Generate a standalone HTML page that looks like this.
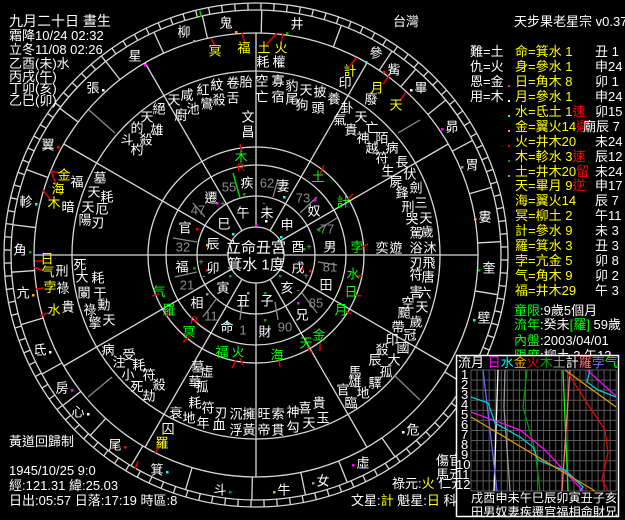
<!DOCTYPE html>
<html><head><meta charset="utf-8">
<style>
html,body{margin:0;padding:0;background:#000;}
body{width:625px;height:520px;overflow:hidden;position:relative;}
svg{position:absolute;left:0;top:0;}
text{font-family:"Liberation Sans","Noto Sans CJK TC",sans-serif;font-size:13px;fill:#fff;}
.c text{text-anchor:middle;dominant-baseline:central;}
.y{fill:#ffff00}.g{fill:#00ff00}.r{fill:#ff0000}.gr{fill:#8c8c8c}
</style></head><body>
<svg id="s" width="625" height="520" viewBox="0 0 625 520">
<g id="geo" fill="none" stroke="#d8d8d8" stroke-width="1.3"></g>
<g stroke="#8a8a8a" stroke-width="1.3">
<line x1="89" y1="110" x2="115" y2="133"/><line x1="398" y1="133" x2="420" y2="120"/>
<line x1="112" y1="377" x2="88" y2="397"/><line x1="394" y1="375" x2="420" y2="400"/>
<line x1="278" y1="179" x2="273" y2="197"/><line x1="317" y1="197" x2="300" y2="213"/>
<line x1="337" y1="218" x2="317" y2="230"/><line x1="317" y1="313" x2="302" y2="293"/>
<line x1="278" y1="320" x2="275" y2="302"/><line x1="240" y1="320" x2="242" y2="302"/>
<line x1="217" y1="298" x2="203" y2="317"/><line x1="197" y1="272" x2="175" y2="277"/>
<line x1="173" y1="238" x2="197" y2="242"/><line x1="193" y1="203" x2="205" y2="217"/>
<line x1="337" y1="265" x2="318" y2="262"/>
</g>
<g stroke="#00d000" stroke-width="1.5"><line x1="233" y1="173" x2="240" y2="198"/><line x1="200" y1="11" x2="201" y2="17"/></g>
<g stroke="#e00000" stroke-width="1.5">
<line x1="211" y1="38" x2="215" y2="46"/><line x1="242" y1="33" x2="245" y2="44"/>
<line x1="277" y1="33" x2="266" y2="45"/><line x1="283" y1="33" x2="281" y2="44"/>
<line x1="356" y1="58" x2="350" y2="66"/><line x1="390" y1="75" x2="383" y2="84"/>
<line x1="406" y1="92" x2="400" y2="101"/><line x1="51" y1="171" x2="60" y2="173"/>
<line x1="51" y1="171" x2="56" y2="184"/><line x1="43" y1="190" x2="50" y2="199"/>
<line x1="35" y1="261" x2="43" y2="261"/><line x1="33" y1="267" x2="42" y2="270"/>
<line x1="36" y1="289" x2="44" y2="288"/><line x1="40" y1="316" x2="48" y2="313"/>
<line x1="240" y1="144" x2="242" y2="152"/><line x1="324" y1="165" x2="320" y2="174"/>
<line x1="353" y1="194" x2="347" y2="200"/><line x1="368" y1="244" x2="362" y2="247"/>
<line x1="362" y1="276" x2="357" y2="276"/><line x1="361" y1="296" x2="355" y2="295"/>
<line x1="351" y1="314" x2="345" y2="311"/><line x1="320" y1="351" x2="320" y2="343"/>
<line x1="312" y1="353" x2="307" y2="347"/><line x1="280" y1="367" x2="279" y2="359"/>
<line x1="243" y1="365" x2="240" y2="358"/><line x1="232" y1="368" x2="236" y2="360"/>
<line x1="183" y1="342" x2="190" y2="336"/><line x1="165" y1="316" x2="172" y2="313"/>
<line x1="152" y1="296" x2="159" y2="294"/><line x1="155" y1="453" x2="160" y2="446"/>
<line x1="135" y1="469" x2="138" y2="461"/>
</g>
<g id="dots"></g>
<g class="c">
<!-- mansions -->
<text x="184" y="32">柳</text><text x="226" y="23">鬼</text><text x="297" y="24">井</text>
<text x="135" y="56">星</text><text x="93" y="88">張</text><text x="48" y="145">翼</text>
<text x="26" y="202">軫</text><text x="20" y="250">角</text><text x="23" y="293">亢</text>
<text x="40" y="350">氐</text><text x="62" y="388">房</text><text x="78" y="412">心</text>
<text x="115" y="445">尾</text><text x="157" y="470">箕</text><text x="220" y="490">斗</text>
<text x="284" y="490">牛</text><text x="323" y="481">女</text><text x="363" y="463">虛</text>
<text x="413" y="430">危</text><text x="484" y="318">壁</text><text x="489" y="268">奎</text>
<text x="485" y="217">婁</text><text x="472" y="165">胃</text><text x="452" y="127">昴</text>
<text x="421" y="88">畢</text><text x="394" y="70">觜</text><text x="376" y="53">參</text>
<!-- yellow planets -->
<text class="y" x="215" y="51">冥</text><text class="y" x="244" y="48">福</text>
<text class="y" x="264" y="48">土</text><text class="y" x="281" y="48">火</text>
<text x="263" y="62">耗</text><text x="279" y="62">權</text>
<text class="y" x="350" y="71">計</text><text x="345" y="83">印</text>
<text class="y" x="377" y="88">月</text><text x="371" y="99">廢</text><text class="y" x="396" y="105">天</text>
<text class="y" x="64" y="175">金</text><text x="77" y="182">福</text><text class="y" x="58" y="189">海</text>
<text class="y" x="54" y="203">木</text><text x="68" y="207">暗</text>
<text class="y" x="47" y="259">日</text><text class="y" x="48" y="272">气</text><text x="62" y="271">刑</text>
<text class="y" x="50" y="287">孛</text><text x="63" y="288">祿</text>
<text class="y" x="54" y="310">水</text><text x="68" y="307">貴</text>
<text class="y" x="162" y="443">羅</text><text x="168" y="429">囚</text>
<!-- green planets -->
<text class="g" x="241" y="157">木</text><text class="r" x="241" y="168" style="font-size:11px">R</text>
<text class="g" x="318" y="177">土</text><text class="g" x="343" y="202">計</text>
<text class="g" x="357" y="247">孛</text><text class="g" x="353" y="274">水</text>
<text class="g" x="351" y="292">日</text><text class="g" x="341" y="310">月</text>
<text class="g" x="159" y="292">气</text><text class="g" x="169" y="310">羅</text>
<text class="r" x="194" y="321" style="font-size:11px">R</text><text class="g" x="189" y="332">冥</text>
<text class="g" x="222" y="352">福</text><text class="g" x="238" y="352">火</text>
<text class="g" x="277" y="355">海</text><text class="g" x="306" y="343">天</text><text class="g" x="319" y="335">金</text>
<!-- stars top -->
<text x="246" y="82">胎</text><text x="262" y="81">空</text><text x="278" y="81">寡</text>
<text x="292" y="86">豹</text><text x="306" y="90">天</text><text x="320" y="92">披</text><text x="334" y="99">養</text>
<text x="262" y="97">亡</text><text x="278" y="97">宿</text><text x="292" y="99">尾</text>
<text x="302" y="105">狗</text><text x="318" y="108">頭</text>
<text x="233" y="83">卷</text><text x="233" y="98">舌</text><text x="217" y="85">紋</text><text x="219" y="100">殺</text>
<text x="203" y="90">紅</text><text x="207" y="104">鸞</text><text x="187" y="95">咸</text><text x="193" y="109">池</text>
<text x="248" y="117">文</text><text x="248" y="132">昌</text>
<text x="174" y="100">天</text><text x="181" y="115">廚</text><text x="159" y="109">絕</text>
<text x="147" y="117">天</text><text x="157" y="130">雄</text><text x="137" y="128">的</text>
<text x="146" y="140">殺</text><text x="127" y="140">斗</text><text x="137" y="150">杓</text>
<text x="100" y="178">墓</text><text x="94" y="192">天</text><text x="107" y="197">耗</text>
<text x="88" y="207">天</text><text x="102" y="209">厄</text><text x="85" y="220">陽</text><text x="98" y="223">刃</text>
<text x="80" y="265">死</text><text x="82" y="277">大</text><text x="98" y="278">耗</text>
<text x="84" y="293">闌</text><text x="100" y="293">干</text><text x="90" y="310">祿</text>
<text x="104" y="305">勳</text><text x="95" y="323">擎</text><text x="109" y="320">天</text>
<text x="108" y="350">病</text><text x="129" y="355">受</text><text x="119" y="362">注</text>
<text x="139" y="365">耗</text><text x="149" y="375">符</text><text x="128" y="375">小</text>
<text x="159" y="385">殺</text><text x="137" y="387">死</text><text x="149" y="396">劫</text>
<text x="198" y="367">墓</text><text x="207" y="372">虛</text><text x="195" y="382">華</text><text x="202" y="387">孤</text>
<text x="195" y="403">耗</text><text x="208" y="408">符</text><text x="176" y="413">衰</text><text x="189" y="418">地</text>
<text x="221" y="413">刃</text><text x="203" y="423">年</text><text x="219" y="425">血</text>
<text x="236" y="414">沉</text><text x="236" y="430">浮</text><text x="249" y="414">擁</text><text x="249" y="430">黃</text>
<text x="264" y="414">旺</text><text x="264" y="430">帝</text><text x="278" y="414">索</text><text x="278" y="430">貫</text>
<text x="293" y="412">神</text><text x="293" y="427">勾</text><text x="305" y="408">喜</text><text x="309" y="423">天</text>
<text x="319" y="403">貴</text><text x="323" y="418">玉</text>
<text x="343" y="390">官</text><text x="351" y="403">臨</text><text x="355" y="382">雄</text><text x="363" y="393">地</text>
<text x="355" y="372">馬</text><text x="375" y="383">驛</text><text x="375" y="360">辰</text><text x="386" y="372">孤</text>
<text x="382" y="350">殺</text><text x="394" y="360">大</text><text x="392" y="340">印</text><text x="403" y="348">國</text>
<text x="398" y="327">帶</text><text x="410" y="335">冠</text><text x="404" y="313">颱</text><text x="416" y="322">歲</text>
<text x="408" y="303">空</text><text x="422" y="307">天</text><text x="416" y="292">害</text><text x="425" y="293">六</text>
<text x="416" y="275">符</text><text x="428" y="277">唐</text><text x="416" y="263">刃</text><text x="429" y="263">飛</text>
<text x="347" y="108">卦</text><text x="361" y="117">天</text><text x="372" y="128">亡</text>
<text x="340" y="120">氣</text><text x="351" y="130">貴</text><text x="382" y="138">陌</text><text x="363" y="138">神</text>
<text x="392" y="148">病</text><text x="372" y="148">越</text><text x="382" y="158">符</text><text x="402" y="162">長</text>
<text x="388" y="171">生</text><text x="410" y="174">伏</text><text x="396" y="182">屍</text><text x="416" y="188">劍</text>
<text x="402" y="193">鋒</text><text x="421" y="203">三</text><text x="408" y="207">刑</text>
<text x="426" y="218">天</text><text x="412" y="219">哭</text><text x="427" y="232">歲</text><text x="416" y="233">駕</text>
<text x="416" y="248">浴</text><text x="430" y="248">沐</text><text x="382" y="248">奕</text><text x="396" y="248">遊</text>
<!-- houses -->
<text x="247" y="183">疾</text><text class="gr" x="229" y="187">55</text><text class="gr" x="267" y="183">62</text>
<text x="283" y="186">妻</text><text class="gr" x="303" y="198">73</text><text x="314" y="211">奴</text>
<text class="gr" x="327" y="229">77</text><text x="330" y="247">男</text><text class="gr" x="330" y="267">81</text>
<text x="326" y="285">田</text><text class="gr" x="316" y="303">85</text><text x="302" y="315">兄</text>
<text class="gr" x="285" y="327">90</text><text x="265" y="332">財</text><text class="gr" x="243" y="330">1</text>
<text x="227" y="327">命</text><text class="gr" x="211" y="316">11</text><text x="197" y="303">相</text>
<text class="gr" x="187" y="285">21</text><text x="182" y="267">福</text><text class="gr" x="183" y="247">32</text>
<text x="185" y="228">官</text><text class="gr" x="198" y="210">47</text><text x="211" y="198">遷</text>
<text x="243" y="213">午</text><text x="267" y="213">未</text><text x="287" y="225">申</text>
<text x="298" y="247">酉</text><text x="298" y="268">戌</text><text x="287" y="288">亥</text>
<text x="267" y="301">子</text><text x="243" y="301">丑</text><text x="223" y="288">寅</text>
<text x="213" y="268">卯</text><text x="213" y="244">辰</text><text x="224" y="224">巳</text>
<text class="gr" x="223" y="205" style="font-size:10px">+</text><text class="gr" x="234" y="200" style="font-size:10px">-</text>
<text class="gr" x="264" y="204" style="font-size:10px">-</text><text class="gr" x="309" y="248" style="font-size:10px">+</text>
<text class="gr" x="306" y="277" style="font-size:10px">+</text><text class="gr" x="298" y="291" style="font-size:10px">-</text>
<text class="gr" x="201" y="263" style="font-size:10px">+</text><text class="gr" x="204" y="277" style="font-size:10px">-</text>
<text x="256" y="248" style="font-size:15px">立命丑宮</text>
<text x="256" y="265" style="font-size:15px">箕水 1度</text>
</g>
<!-- left text -->
<g>
<text x="9" y="26" style="font-size:14px">九月二十日 晝生</text>
<text x="9" y="40">霜降10/24 02:32</text>
<text x="9" y="54">立冬11/08 02:26</text>
<text x="9" y="68">乙酉(未)水</text>
<text x="9" y="81">丙戌(午)</text>
<text x="9" y="93">丁卯(亥)</text>
<text x="9" y="105">乙巳(卯)</text>
<text x="393" y="26">台灣</text>
<text x="514" y="26">天步果老星宗 v0.37</text>
<text x="9" y="446">黃道回歸制</text>
<text x="9" y="475">1945/10/25 9:0</text>
<text x="9" y="490">經:121.31 緯:25.03</text>
<text x="9" y="505">日出:05:57 日落:17:19 時區:8</text>
<text x="436" y="465">傷官</text><text x="436" y="479">馬元</text>
<text x="392" y="488">祿元:<tspan class="y">火</tspan> 仁元</text>
<text x="351" y="505">文星:<tspan class="y">計</tspan> 魁星:<tspan class="y">日</tspan> 科名</text>
</g>
<!-- right panel -->
<g>
<text x="470" y="56">難=土</text><text x="470" y="71">仇=火</text><text x="470" y="86">恩=金</text><text x="470" y="101">用=木</text>
<g class="yy">
<text class="y" x="515" y="56">命=箕水 1</text><text x="595" y="56">丑 1</text>
<text class="y" x="515" y="71">身=參水 1</text><text x="595" y="71">申24</text>
<text class="y" x="515" y="86">日=角木 8</text><text x="595" y="86">卯 1</text>
<text class="y" x="515" y="101">月=參水 1</text><text x="595" y="101">申24</text>
<text class="y" x="515" y="116">水=氐土 1<tspan class="r">速</tspan></text><text x="595" y="116">卯15</text>
<text class="y" x="515" y="131">金=翼火14<tspan class="r">遲</tspan></text><text x="583" y="131">廟辰 7</text>
<text class="y" x="515" y="146">火=井木20</text><text x="595" y="146">未24</text>
<text class="y" x="515" y="161">木=軫水 3<tspan class="r">速</tspan></text><text x="595" y="161">辰12</text>
<text class="y" x="515" y="176">土=井木20<tspan class="r">留</tspan></text><text x="595" y="176">未24</text>
<text class="y" x="515" y="190">天=畢月 9<tspan class="r">逆</tspan></text><text x="595" y="190">申17</text>
<text class="y" x="515" y="205">海=翼火14</text><text x="595" y="205">辰 7</text>
<text class="y" x="515" y="220">冥=柳土 2</text><text x="595" y="220">午11</text>
<text class="y" x="515" y="235">計=參水 9</text><text x="595" y="235">未 3</text>
<text class="y" x="515" y="250">羅=箕水 3</text><text x="595" y="250">丑 3</text>
<text class="y" x="515" y="265">孛=亢金 5</text><text x="595" y="265">卯 8</text>
<text class="y" x="515" y="280">气=角木 9</text><text x="595" y="280">卯 2</text>
<text class="y" x="515" y="295">福=井木29</text><text x="595" y="295">午 3</text>
</g>
<text x="514" y="315"><tspan class="g">童限</tspan>:9歲5個月</text>
<text x="514" y="329"><tspan class="g">流年</tspan>:癸未<tspan class="g">[羅]</tspan>  59歲</text>
<text x="514" y="345"><tspan class="g">內盤</tspan>:2003/04/01</text>
<text x="514" y="360"><tspan class="g">限度</tspan>:柳土 3  午13</text>
<rect x="508" y="85" width="2" height="2" fill="#f0f"/><rect x="508" y="100" width="2" height="2" fill="#fff"/>
<rect x="508" y="115" width="2" height="2" fill="#0ff"/><rect x="508" y="130" width="2" height="2" fill="#fa0"/>
<rect x="508" y="145" width="2" height="2" fill="#f00"/><rect x="508" y="160" width="2" height="2" fill="#0a0"/>
<rect x="508" y="175" width="2" height="2" fill="#999"/>
</g>
<!-- graph box -->
<rect x="456.5" y="355.5" width="162" height="161" fill="#000" stroke="#fff" stroke-width="1.5"/>
<g id="grid" stroke="#5a5a5a" stroke-width="1"></g>
<text x="458" y="367">流月 <tspan fill="#f0f">日</tspan><tspan fill="#0ff">水</tspan><tspan fill="#fa0">金</tspan><tspan fill="#f00">火</tspan><tspan fill="#0a0">木</tspan><tspan fill="#999">土</tspan>計<tspan fill="#f77">羅</tspan><tspan fill="#77f">孛</tspan><tspan fill="#0f0">气</tspan></text>
<g fill="none" stroke-width="1.3">
<polyline stroke="#fff" points="498,370 496,430 494,491"/>
<polyline stroke="#66f" points="483,370 490,430 497,491"/>
<polyline stroke="#999" points="505,370 504,407 510,491"/>
<polyline stroke="#090" points="527,370 523,407 535,450 540,491"/>
<polyline stroke="#0f0" points="563,370 568,491"/>
<polyline stroke="#f77" points="570,370 562,491"/>
<polyline stroke="#e00" points="568,373 585,400 605,430 608,453 602,480 608,491"/>
<polyline stroke="#f0f" points="587,370 616,396"/><polyline stroke="#f0f" points="471,412 520,430 545,450 583,491"/>
<polyline stroke="#0cc" points="590,370 587,382 598,390 616,397"/>
<polyline stroke="#0cc" points="471,397 488,403 495,423 520,437 533,447 538,460 555,467 565,470 583,487 580,491"/>
<polyline stroke="#d90" points="565,370 616,407"/><polyline stroke="#d90" points="471,417 595,491"/>
</g>
<g style="font-size:12px">
<text x="461" y="379">1</text><text x="461" y="389">2</text><text x="461" y="399">3</text><text x="461" y="409">4</text>
<text x="461" y="419">5</text><text x="461" y="429">6</text><text x="461" y="439">7</text><text x="461" y="449">8</text>
<text x="461" y="459">9</text><text x="456" y="469">10</text><text x="456" y="479">11</text><text x="456" y="489">12</text>
</g>
<text x="471" y="502" style="font-size:12.2px">戌酉申未午巳辰卯寅丑子亥</text>
<text x="471" y="516" style="font-size:12.2px">田男奴妻疾遷官福相命財兄</text>
</svg>
<script>
(function(){
var NS="http://www.w3.org/2000/svg",g=document.getElementById('geo'),cx=256,cy=255;
function el(n,a,p){var e=document.createElementNS(NS,n);for(var k in a)e.setAttribute(k,a[k]);(p||g).appendChild(e);return e;}
[252,245,222,184,108,90,59,28].forEach(function(r){el('circle',{cx:cx,cy:cy,r:r});});
function rl(a,r1,r2,p,at){var c=Math.cos(a),s=Math.sin(a);var o={x1:cx+r1*c,y1:cy+r1*s,x2:cx+r2*c,y2:cy+r2*s};for(var k in at)o[k]=at[k];el('line',o,p);}
for(var i=0;i<12;i++){var a=i*Math.PI/6;rl(a,28,222);}
for(var i=0;i<120;i++){rl(i*Math.PI/60+0.02,245,252);}
var L=[[184,32],[226,23],[297,24],[135,56],[93,88],[48,145],[26,202],[20,250],[23,293],[40,350],[62,388],[78,412],[115,445],[157,470],[220,490],[284,490],[323,481],[363,463],[413,430],[484,318],[489,268],[485,217],[472,165],[452,127],[421,88],[394,70],[376,53]];
var A=L.map(function(p){return Math.atan2(p[1]-cy,p[0]-cx);}).sort(function(a,b){return a-b;});
for(var i=0;i<A.length;i++){var a=A[i],b=A[(i+1)%A.length];if(b<a)b+=2*Math.PI;var m=(a+b)/2;if(b-a>0.6){rl(a+0.12,222,245);rl(b-0.12,222,245);}else rl(m,222,245);}
var gr=document.getElementById('grid');
for(var x=471;x<=617;x+=6.05)el('line',{x1:x,y1:370,x2:x,y2:491},gr);
for(var y=370;y<=492;y+=10.08)el('line',{x1:471,y1:y,x2:616,y2:y},gr);
var d=document.getElementById('dots'),cols=['#999','#fa0','#0a0','#f0f','#fff','#f00','#0ff','#0a0','#fa0','#fff','#f0f','#fff','#f00','#0ff','#0a0','#fa0','#999','#f0f','#fff','#0ff','#0a0','#fa0','#999','#f0f','#fff','#f00','#0ff'];
L.forEach(function(p,i){el('rect',{x:p[0]+(p[0]<256?9:-11),y:p[1]+(p[1]<60?8:1),width:2.5,height:2.5,fill:cols[i]},d);});
[[243,193,'#0a0'],[283,196,'#0ff'],[314,199,'#f0f'],[318,229,'#0a0'],[303,248,'#0a0'],[301,268,'#f00'],[309,270,'#f00'],[279,275,'#0a0'],[297,302,'#f0f'],[264,292,'#0a0'],[247,292,'#999'],[229,275,'#0a0'],[206,269,'#f00'],[206,244,'#fa0'],[232,233,'#0ff'],[255,224,'#f0f'],[226,322,'#0ff'],[206,293,'#999'],[280,236,'#0ff'],[196,228,'#f00'],[193,267,'#0a0'],[265,220,'#fff'],[264,319,'#0a0'],[216,202,'#f0f']].forEach(function(p){el('rect',{x:p[0],y:p[1],width:2.5,height:2.5,fill:p[2]},d);});
})();
</script>
</body></html>
